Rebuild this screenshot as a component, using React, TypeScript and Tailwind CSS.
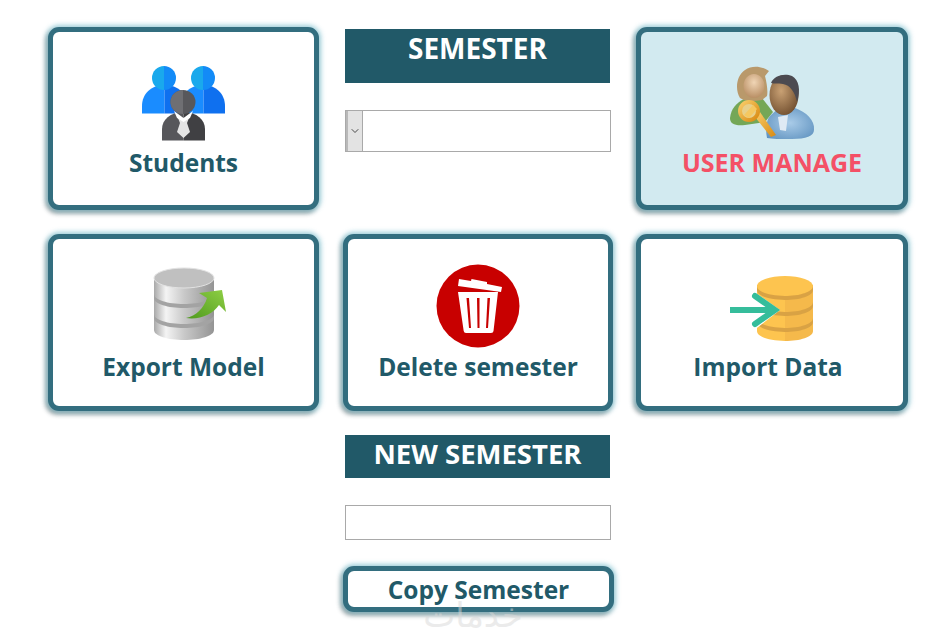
import { ChevronDown } from "lucide-react";

// ── Icons, drawn in page-pixel coordinates through the viewBox ────────────────

function StudentsIcon() {
  return (
    <svg width="84" height="76" viewBox="142 66 84 76">
      {/* left person */}
      <path d="M142 113.500V106C142 94 151 85 164.500 85V113.500Z" fill="#1a8cff" />
      <path d="M164.500 113.500V85C178 85 188 94 188 106V113.500Z" fill="#0f70ef" />
      <path d="M164 66a12 12 0 0 0 0 24Z" fill="#1aa9ec" />
      <path d="M164 66a12 12 0 0 1 0 24Z" fill="#138bf7" />
      {/* right person */}
      <path d="M180 113.500V106C180 94 190 85 203.500 85V113.500Z" fill="#1a8cff" />
      <path d="M203.500 113.500V85C216 85 225 94 225 106V113.500Z" fill="#0f70ef" />
      <path d="M203 66a12 12 0 0 0 0 24Z" fill="#1aa9ec" />
      <path d="M203 66a12 12 0 0 1 0 24Z" fill="#138bf7" />
      {/* front person */}
      <path d="M162 140.500V129C162 120 170 112 183.500 112V140.500Z" fill="#57575b" />
      <path d="M183.500 140.500V112C197 112 205 120 205 129V140.500Z" fill="#404043" />
      <path d="M178 118H189L187 123L190 132L183.500 138L177 132L180 123Z" fill="#e4e4e4" />
      <path d="M174 111L183.500 118L193 111L190 118L183.500 122L177 118Z" fill="#ffffff" />
      <ellipse cx="183" cy="102" rx="12.500" ry="12" fill="#58585c" />
      <path d="M183 90a12.500 12 0 0 0 0 24Z" fill="#6f6f73" />
    </svg>
  );
}

function ExportIcon() {
  return (
    <svg width="87" height="74" viewBox="140 267 87 74">
      <defs>
        <linearGradient id="metal" x1="0" x2="1" y1="0" y2="0">
          <stop offset="0" stopColor="#a9a9a9" />
          <stop offset="0.2" stopColor="#f4f4f4" />
          <stop offset="0.5" stopColor="#c9c9c9" />
          <stop offset="1" stopColor="#949494" />
        </linearGradient>
        <linearGradient id="arrow" x1="0" x2="1" y1="1" y2="0">
          <stop offset="0" stopColor="#4f9a1e" />
          <stop offset="1" stopColor="#8fcf45" />
        </linearGradient>
      </defs>
      <path d="M154 278V330C154 336 168 340 184 340C200 340 214 336 214 330V278Z" fill="url(#metal)" />
      <path d="M154 294C154 300 168 304 184 304C200 304 214 300 214 294V298C214 304 200 308 184 308C168 308 154 304 154 298Z" fill="#a3a3a3" />
      <path d="M154 314C154 320 168 324 184 324C200 324 214 320 214 314V318C214 324 200 328 184 328C168 328 154 324 154 318Z" fill="#a3a3a3" />
      <ellipse cx="184" cy="278" rx="30" ry="10" fill="#c0c0c0" stroke="#e2e2e2" />
      <path d="M186 318C196 316 204 308 207 298L199 293L222 290L226 312L219 305C213 314 200 320 186 318Z" fill="url(#arrow)" />
    </svg>
  );
}

function TrashIcon() {
  return (
    <svg width="84" height="84" viewBox="435 264 84 84">
      <circle cx="477" cy="306" r="41.500" fill="#c80000" />
      <path d="M457 292H497L492.500 331Q492.300 333 490 333H465Q463 333 462.700 331Z" fill="#ffffff" />
      <path d="M465.500 298H468L470 328H468Z M476 298H478.500V328H476.500Z M486.500 298H489L487 328H485Z" fill="#c80000" />
      <path d="M458 279L470 281L470.500 279L486 282L486 284L501 287L500 292L457 286Z" fill="#ffffff" />
    </svg>
  );
}

function ImportIcon() {
  return (
    <svg width="84" height="66" viewBox="730 276 84 66">
      <path d="M757 285V331C757 337 770 341 785 341V285Z" fill="#fdc44f" />
      <path d="M785 285V341C800 341 813 337 813 331V285Z" fill="#f5b94b" />
      <path d="M757 302C757 308 770 312 785 312C800 312 813 308 813 302V306C813 312 800 316 785 316C770 316 757 312 757 306Z" fill="#d9a244" />
      <path d="M757 318C757 324 770 328 785 328C800 328 813 324 813 318V322C813 328 800 332 785 332C770 332 757 328 757 322Z" fill="#d9a244" />
      <ellipse cx="785" cy="286" rx="28" ry="10" fill="#fdc44f" />
      <path d="M757 286C757 292 770 296 785 296C800 296 813 292 813 286V290C813 296 800 300 785 300C770 300 757 296 757 290Z" fill="#d9a244" />
      <path d="M750 310L753 291L780 310L753 331Z" fill="#ffffff" />
      <path d="M731 310H773M755 296L775 310L755 324" fill="none" stroke="#35bd9b" strokeWidth="6" strokeLinejoin="miter" strokeLinecap="round" />
    </svg>
  );
}

function UserManageIcon() {
  return (
    <svg width="88" height="76" viewBox="728 66 88 76">
      <defs>
        <radialGradient id="skin" cx="0.5" cy="0.35" r="0.7">
          <stop offset="0" stopColor="#f0d5b5" />
          <stop offset="1" stopColor="#b58a5f" />
        </radialGradient>
        <radialGradient id="skinDark" cx="0.4" cy="0.4" r="0.7">
          <stop offset="0" stopColor="#c9a174" />
          <stop offset="1" stopColor="#6c4a2b" />
        </radialGradient>
        <radialGradient id="shirt" cx="0.5" cy="0.5" r="0.7">
          <stop offset="0" stopColor="#a9cbe8" />
          <stop offset="1" stopColor="#5b8fbd" />
        </radialGradient>
        <linearGradient id="gold" x1="0" x2="1" y1="0" y2="1">
          <stop offset="0" stopColor="#f8cd6a" />
          <stop offset="1" stopColor="#d98a12" />
        </linearGradient>
      </defs>
      {/* woman */}
      <path d="M730 118C731 109 736 103 744 99L762 98L773 112L765 122L745 125C735 126 730 124 730 118Z" fill="#74a757" />
      <path d="M745 70C752 65 762 66 769 71L765 76C767 84 768 92 767 96L762 100C752 102 744 101 740 98C735 90 736 76 745 70Z" fill="#b9996b" />
      <ellipse cx="754" cy="86" rx="10.500" ry="12" fill="url(#skin)" />
      {/* man */}
      <path d="M767 138C765 127 767 118 771 115L780 107L795 108C806 112 815 120 814 130C814 136 806 139 792 139C780 139 772 139 767 138Z" fill="url(#shirt)" />
      <path d="M778 117L788 115L786 131L780 130Z" fill="#dfeaf4" />
      <ellipse cx="784" cy="95" rx="14.500" ry="20" fill="url(#skinDark)" />
      <path d="M771 83C774 75 785 73 792 76C799 80 801 90 797 102C795 92 790 85 783 84C778 83 774 84 771 83Z" fill="#4c4a50" />
      {/* key */}
      <path d="M755 117L771 137L776 135L760 112Z" fill="url(#gold)" />
      <circle cx="749" cy="111" r="9" fill="#e8d08a" stroke="url(#gold)" strokeWidth="4" />
      <path d="M744 115L753 105L757 109L749 118Z" fill="#f5c860" />
    </svg>
  );
}

// ── Parts ──────────────────────────────────────────────────────────────────────

const CARD =
  "flex flex-col items-center rounded-[11px] border-[5px] border-[#336e7f] shadow-[0_0_5px_2px_rgba(130,195,210,0.75),-2px_3px_5px_rgba(0,0,0,0.45)]";
const LABEL = "font-['Open_Sans',sans-serif] font-bold text-[24.500px] leading-[32px]";
const BANNER =
  "flex justify-center bg-[#215968] font-['Open_Sans',sans-serif] font-bold text-white leading-[38px]";

function Card({
  icon,
  label,
  className,
  labelClass,
}: {
  icon: React.ReactNode;
  label: string;
  className: string;
  labelClass: string;
}) {
  return (
    <div className={`${CARD} ${className}`}>
      {icon}
      <span className={`${LABEL} ${labelClass}`}>{label}</span>
    </div>
  );
}

export default function App() {
  return (
    <div className="relative h-[633px] w-[947px] overflow-hidden bg-white pl-[48px] pt-[27px]">
      {/* top two rows */}
      <div className="grid grid-cols-[271px_270px_271px] grid-rows-[183px_177px] gap-x-[24px] gap-y-[24px]">
        <Card
          icon={<StudentsIcon />}
          label="Students"
          className="h-[183px] bg-white pt-[34px] text-[#215968]"
          labelClass="mt-[5px]"
        />

        <div className="flex flex-col pl-[2px] pt-[2px]">
          <div className={`${BANNER} h-[54px] w-[265px] text-[28px]`}>SEMESTER</div>
          <div className="mt-[27px] flex h-[42px] w-[266px] border border-[#a9a9a9] bg-white">
            <div className="flex w-[17px] items-center justify-center border-l-2 border-r border-[#b9b9b9] border-r-[#a9a9a9] bg-[#e3e3e3] text-[#333333]">
              <ChevronDown size={12} strokeWidth={1.75} />
            </div>
          </div>
        </div>

        <Card
          icon={<UserManageIcon />}
          label="USER MANAGE"
          className="-ml-px h-[183px] bg-[#d2eaf0] pt-[34px] text-[#f45066]"
          labelClass="mt-[4px] text-[25px]"
        />

        <Card
          icon={<ExportIcon />}
          label="Export Model"
          className="h-[177px] bg-white pt-[28px] text-[#215968]"
          labelClass="mt-[10px]"
        />
        <Card
          icon={<TrashIcon />}
          label="Delete semester"
          className="h-[177px] bg-white pt-[25px] text-[#215968]"
          labelClass="mt-[3px]"
        />
        <Card
          icon={<ImportIcon />}
          label="Import Data"
          className="-ml-px h-[177px] bg-white pt-[37px] text-[#215968]"
          labelClass="mt-[9px] mr-[8px]"
        />
      </div>

      {/* new semester column */}
      <div className="ml-[297px] mt-[24px] flex w-[271px] flex-col">
        <div className={`${BANNER} h-[43px] w-[265px] text-[27.500px]`}>NEW SEMESTER</div>
        <div className="mt-[27px] h-[35px] w-[266px] border border-[#a9a9a9] bg-white" />
        <div className="-ml-[2px] mt-[26px] flex h-[46px] w-[271px] flex-col items-center rounded-[11px] border-[5px] border-[#336e7f] bg-white pt-[7px] text-[#215968] shadow-[0_0_5px_2px_rgba(130,195,210,0.75),-2px_3px_5px_rgba(0,0,0,0.45)]">
          <span className="font-['Open_Sans',sans-serif] text-[24.500px] font-bold leading-[24px]">Copy Semester</span>
        </div>
      </div>

      {/* faint watermark behind the copy button */}
      <span
        dir="rtl"
        className="pointer-events-none absolute left-[415px] top-[602px] w-[116px] text-center font-['DejaVu_Sans',sans-serif] text-[34px] leading-[26px] text-[#d8d8d8] opacity-50"
      >
        خدمات
      </span>
    </div>
  );
}
